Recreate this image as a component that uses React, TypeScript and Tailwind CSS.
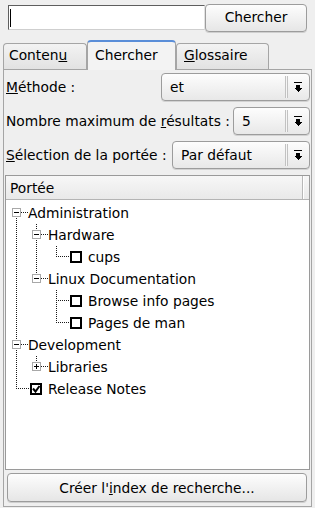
import React from 'react';

type Kind = 'open' | 'closed' | 'check' | 'checked';
type Row = { label: string; level: number; kind: Kind; anc: boolean[]; own: 'tm' | 'tb' | 'mb' };

const rows: Row[] = [
  { label: 'Administration', level: 0, kind: 'open', anc: [], own: 'mb' },
  { label: 'Hardware', level: 1, kind: 'open', anc: [true], own: 'tb' },
  { label: 'cups', level: 2, kind: 'check', anc: [true, true], own: 'tm' },
  { label: 'Linux Documentation', level: 1, kind: 'open', anc: [true], own: 'tm' },
  { label: 'Browse info pages', level: 2, kind: 'check', anc: [true, false], own: 'tb' },
  { label: 'Pages de man', level: 2, kind: 'check', anc: [true, false], own: 'tm' },
  { label: 'Development', level: 0, kind: 'open', anc: [], own: 'tb' },
  { label: 'Libraries', level: 1, kind: 'closed', anc: [true], own: 'tm' },
  { label: 'Release Notes', level: 0, kind: 'checked', anc: [], own: 'tm' },
];

const DOT = '#1a1a1a';

function Gutter({ row }: { row: Row }) {
  const cx = 10 + 20 * row.level;
  const isCheck = row.kind === 'check' || row.kind === 'checked';
  const W = isCheck ? cx + 32 : cx + 12;
  const v = (x: number, y1: number, y2: number, key: string) => (
    <line key={key} x1={x + 0.5} x2={x + 0.5} y1={y1} y2={y2} stroke={DOT} strokeWidth={1} strokeDasharray="1 1" />
  );
  const parts: React.ReactNode[] = [];
  row.anc.forEach((a, i) => {
    if (a) parts.push(v(10 + 20 * i, 0, 22, 'a' + i));
  });
  if (row.own === 'tm') parts.push(v(cx, 0, 11, 'own'));
  if (row.own === 'tb') parts.push(v(cx, 0, 22, 'own'));
  if (row.own === 'mb') parts.push(v(cx, 10, 22, 'own'));
  if (isCheck) {
    parts.push(<line key="h" x1={cx + 2} x2={cx + 14} y1={10.5} y2={10.5} stroke={DOT} strokeDasharray="1 1" />);
    parts.push(<rect key="cb" x={cx + 15} y={6} width={10} height={10} fill="#fff" stroke="#000" strokeWidth={2} />);
    if (row.kind === 'checked') {
      parts.push(
        <polyline key="ck" points={`${cx + 17},${10.5} ${cx + 19.5},${13.5} ${cx + 23.5},${8}`} fill="none" stroke="#000" strokeWidth={2} shapeRendering="auto" />
      );
    }
  } else {
    parts.push(<line key="h" x1={cx + 5} x2={cx + 12} y1={10.5} y2={10.5} stroke={DOT} strokeDasharray="1 1" />);
    parts.push(<rect key="bx" x={cx - 3.5} y={6.5} width={8} height={8} fill="#fff" stroke="#a8a8a8" strokeWidth={1} />);
    parts.push(<line key="mn" x1={cx - 2} x2={cx + 3} y1={10.5} y2={10.5} stroke="#000" strokeWidth={1} />);
    if (row.kind === 'closed') {
      parts.push(<line key="pl" x1={cx + 0.5} x2={cx + 0.5} y1={8} y2={13} stroke="#000" strokeWidth={1} />);
    }
  }
  return (
    <svg width={W} height={22} viewBox={`0 0 ${W} 22`} shapeRendering="crispEdges" className="shrink-0">
      {parts}
    </svg>
  );
}

function Arrow() {
  return (
    <svg width="8" height="11" viewBox="0 0 8 11" shapeRendering="crispEdges">
      <rect x="0" y="0" width="8" height="1" fill="#000" />
      <rect x="2" y="3" width="4" height="3" fill="#000" />
      <path d="M0 6 L8 6 L4 10 Z" fill="#000" />
    </svg>
  );
}

function Combo({ value, className }: { value: string; className: string }) {
  return (
    <div
      className={
        'flex h-[28px] items-center rounded-[4px] border border-[#9c9c9c] bg-gradient-to-b from-[#fdfdfd] to-[#e8e8e8] shadow-[0_1px_0_#d2d2d2] ' +
        className
      }
    >
      <div className="flex-1 pl-[8px] whitespace-nowrap">{value}</div>
      <div className="h-[22px] w-[1px] bg-[#c2c2c2]" />
      <div className="h-[22px] w-[1px] bg-[#f6f6f6]" />
      <div className="h-[22px] w-[1px] bg-[#c2c2c2]" />
      <div className="flex w-[21px] items-center justify-center pr-[1px]">
        <Arrow />
      </div>
    </div>
  );
}

export default function App() {
  return (
    <div className="h-[508px] w-[315px] overflow-hidden bg-[#efefef] font-['DejaVu_Sans',sans-serif] text-[13.8px] leading-[16px] text-black">
      {/* search row */}
      <div className="flex items-start pl-[8px] pt-[4px]">
        <div className="mt-[1px] flex h-[25px] w-[197px] items-center border border-t-[#5e5e5e] border-l-[#5e5e5e] border-b-[#cfcfcf] border-r-[#e2e2e2] bg-white">
          <div className="ml-[1px] h-[18px] w-[1px] bg-black" />
        </div>
        <div className="flex h-[28px] w-[102px] items-center justify-center rounded-[4px] border border-[#9c9c9c] bg-gradient-to-b from-[#fdfdfd] to-[#e6e6e6] pb-[3px] shadow-[0_1px_0_#cfcfcf]">
          Chercher
        </div>
      </div>

      {/* tabs */}
      <div className="ml-[3px] mt-[7px] flex h-[30px] items-end">
        <div className="h-[26px] w-[84px] rounded-t-[4px] border border-b-0 border-[#a5a5a5] bg-gradient-to-b from-[#f3f3f3] to-[#e2e2e2] pl-[5px] pt-[3px]">
          Conten<u>u</u>
        </div>
        <div className="relative z-10 -mb-[1px] h-[30px] w-[89px] rounded-t-[4px] border border-b-0 border-[#a5a5a5] border-t-2 border-t-[#5a8ed8] bg-[#f3f3f3] pl-[7px] pt-[5px]">
          Chercher
        </div>
        <div className="h-[26px] w-[93px] rounded-t-[4px] border border-b-0 border-[#a5a5a5] bg-gradient-to-b from-[#f3f3f3] to-[#e2e2e2] pl-[7px] pt-[3px]">
          <u>G</u>lossaire
        </div>
      </div>

      {/* panel */}
      <div className="ml-[3px] flex h-[438px] w-[309px] flex-col border border-[#a5a5a5] pt-[3px]">
        <div className="flex flex-col gap-[6px] pl-[2px] pr-[1px]">
          <div className="flex h-[28px] items-center justify-between">
            <span>
              <u>M</u>éthode :
            </span>
            <Combo value="et" className="w-[149px]" />
          </div>
          <div className="flex h-[28px] items-center justify-between">
            <span className="whitespace-nowrap">
              Nombre maximum de <u>r</u>ésultats :
            </span>
            <Combo value="5" className="w-[77px]" />
          </div>
          <div className="flex h-[28px] items-center justify-between">
            <span className="whitespace-nowrap">
              <u>S</u>élection de la portée :
            </span>
            <Combo value="Par défaut" className="w-[138px]" />
          </div>
        </div>

        {/* list */}
        <div className="ml-[1px] mt-[6px] flex h-[295px] w-[305px] flex-col border border-[#9a9a9a] bg-white">
          <div className="flex h-[24px] border-b border-[#b4b4b4] bg-gradient-to-b from-[#f7f7f7] to-[#e9e9e9]">
            <div className="flex flex-1 items-center border-r border-[#b8b8b8] pl-[4px]">Portée</div>
            <div className="w-[6px] border-l border-white" />
          </div>
          <div className="flex flex-col pt-[2px]">
            {rows.map((r) => (
              <div key={r.label} className="flex h-[22px] items-center">
                <Gutter row={r} />
                <span className="whitespace-nowrap">{r.label}</span>
              </div>
            ))}
          </div>
        </div>

        <div className="ml-[3px] mt-[3px] flex h-[29px] w-[300px] items-center justify-center rounded-[4px] border border-[#9c9c9c] bg-gradient-to-b from-[#fdfdfd] to-[#e6e6e6] shadow-[0_1px_0_#cfcfcf]">
          <span>
            Créer l'<u>i</u>ndex de recherche...
          </span>
        </div>
      </div>
    </div>
  );
}
